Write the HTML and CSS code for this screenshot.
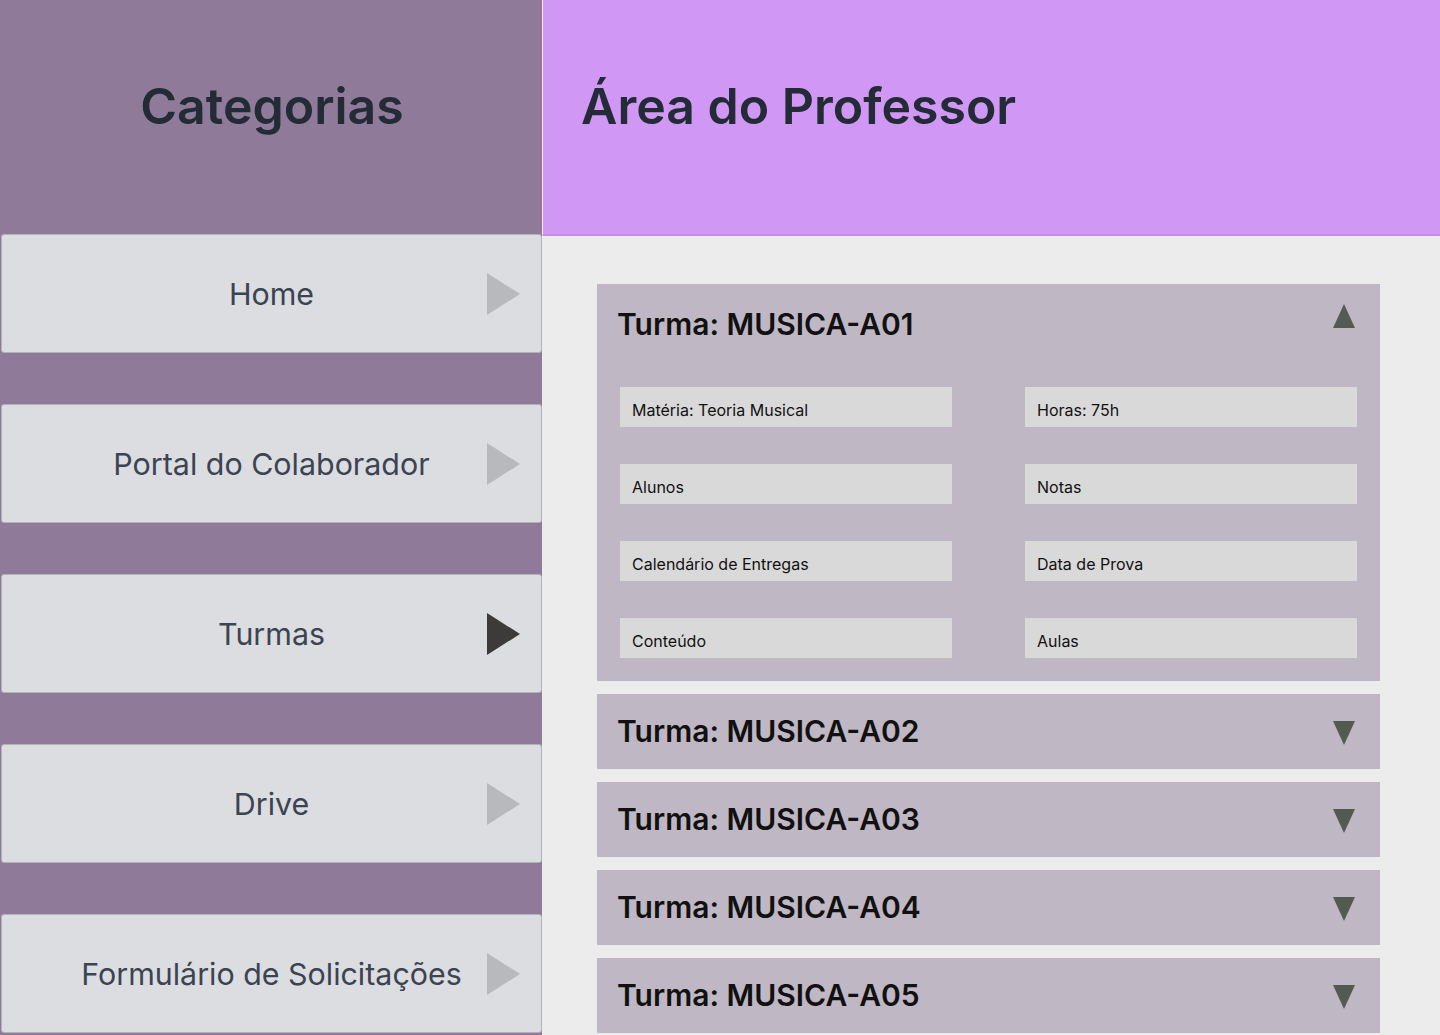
FILE: index.html
```html
<!DOCTYPE html>
<html lang="pt-BR">
<head>
<meta charset="utf-8">
<title>Área do Professor</title>
<link rel="stylesheet" href="styles.css">
</head>
<body>
<div class="page">
  <aside class="sidebar">
    <header class="side-head"><h1>Categorias</h1></header>
    <nav class="nav">
      <a class="nav-item"><span class="nav-label">Home</span><svg class="nav-arrow" width="33" height="42" viewBox="0 0 33 42"><polygon points="0,0 33,21 0,42" fill="#b8b9bc"/></svg></a>
      <a class="nav-item"><span class="nav-label">Portal do Colaborador</span><svg class="nav-arrow" width="33" height="42" viewBox="0 0 33 42"><polygon points="0,0 33,21 0,42" fill="#b8b9bc"/></svg></a>
      <a class="nav-item"><span class="nav-label">Turmas</span><svg class="nav-arrow" width="33" height="42" viewBox="0 0 33 42"><polygon points="0,0 33,21 0,42" fill="#3d3b39"/></svg></a>
      <a class="nav-item"><span class="nav-label">Drive</span><svg class="nav-arrow" width="33" height="42" viewBox="0 0 33 42"><polygon points="0,0 33,21 0,42" fill="#b8b9bc"/></svg></a>
      <a class="nav-item"><span class="nav-label">Formulário de Solicitações</span><svg class="nav-arrow" width="33" height="42" viewBox="0 0 33 42"><polygon points="0,0 33,21 0,42" fill="#b8b9bc"/></svg></a>
    </nav>
  </aside>
  <main class="main">
    <header class="main-head"><h1>Área do Professor</h1></header>
    <section class="content">
      <div class="panel open">
        <div class="panel-head">
          <h2>Turma: MUSICA-A01</h2>
          <svg class="caret up" width="22" height="24" viewBox="0 0 22 24"><polygon points="11,0 22,24 0,24" fill="#525a52"/></svg>
        </div>
        <div class="panel-body">
          <div class="field">Matéria: Teoria Musical</div>
          <div class="field">Horas: 75h</div>
          <div class="field">Alunos</div>
          <div class="field">Notas</div>
          <div class="field">Calendário de Entregas</div>
          <div class="field">Data de Prova</div>
          <div class="field">Conteúdo</div>
          <div class="field">Aulas</div>
        </div>
      </div>
      <div class="panel">
        <div class="panel-head">
          <h2>Turma: MUSICA-A02</h2>
          <svg class="caret" width="22" height="24" viewBox="0 0 22 24"><polygon points="0,0 22,0 11,24" fill="#525a52"/></svg>
        </div>
      </div>
      <div class="panel">
        <div class="panel-head">
          <h2>Turma: MUSICA-A03</h2>
          <svg class="caret" width="22" height="24" viewBox="0 0 22 24"><polygon points="0,0 22,0 11,24" fill="#525a52"/></svg>
        </div>
      </div>
      <div class="panel">
        <div class="panel-head">
          <h2>Turma: MUSICA-A04</h2>
          <svg class="caret" width="22" height="24" viewBox="0 0 22 24"><polygon points="0,0 22,0 11,24" fill="#525a52"/></svg>
        </div>
      </div>
      <div class="panel">
        <div class="panel-head">
          <h2>Turma: MUSICA-A05</h2>
          <svg class="caret" width="22" height="24" viewBox="0 0 22 24"><polygon points="0,0 22,0 11,24" fill="#525a52"/></svg>
        </div>
      </div>
    </section>
  </main>
</div>
</body>
</html>
```
FILE: styles.css
```css
* { box-sizing: border-box; }
html, body { margin: 0; padding: 0; }
body {
  font-family: Inter, "Noto Sans", "Liberation Sans", sans-serif;
  background: #ececec;
  width: 1440px;
  height: 1035px;
  overflow: hidden;
}
.page {
  display: flex;
  height: 1035px;
}
.sidebar {
  width: 542px;
  flex: none;
  background: #8f7b99;
  display: flex;
  flex-direction: column;
}
.side-head {
  height: 234px;
  padding-top: 76px;
  text-align: center;
}
.side-head h1,
.main-head h1 {
  margin: 0;
  font-size: 50px;
  font-weight: 600;
  line-height: 60px;
  color: #232b37;
  letter-spacing: 0;
}
.side-head h1 { padding-left: 2px; }
.nav {
  display: flex;
  flex-direction: column;
  gap: 51px;
  padding-left: 1px;
}
.nav-item {
  height: 119px;
  width: 541px;
  background: #dcdde0;
  border: 1px solid #b1b2b6;
  border-radius: 3px;
  display: grid;
  grid-template-columns: 1fr auto 1fr;
  align-items: center;
}
.nav-label {
  grid-column: 2;
  font-size: 30.4px;
  font-weight: 400;
  color: #3b4452;
  white-space: nowrap;
}
.nav-arrow {
  grid-column: 3;
  justify-self: end;
  margin-right: 21px;
  display: block;
}
.main {
  flex: 1;
  display: flex;
  flex-direction: column;
}
.main-head {
  height: 236px;
  background: #d197f5;
  border-bottom: 2px solid #c78de9;
  border-left: 1px solid #f4ecf8;
  padding: 76px 0 0 38px;
}
.content {
  padding: 48px 60px 0 55px;
  display: flex;
  flex-direction: column;
  gap: 13px;
}
.panel {
  background: #c0b7c4;
}
.panel-head {
  height: 75px;
  display: flex;
  align-items: center;
  justify-content: space-between;
  padding: 0 25px 0 20px;
}
.panel-head h2 {
  margin: 0;
  font-size: 30px;
  font-weight: 600;
  color: #111111;
  line-height: 36px;
  margin-top: -2px;
}
.caret { display: block; margin-top: 2px; }
.caret.up { margin-top: -12px; }
.open .panel-head h2 { margin-top: 5px; }
.panel-body {
  padding: 28px 23px 23px 23px;
  display: grid;
  grid-template-columns: 332px 332px;
  column-gap: 73px;
  row-gap: 37px;
}
.field {
  height: 40px;
  background: #d9d9d9;
  padding: 5px 12px 0;
  display: flex;
  align-items: center;
  font-size: 16px;
  color: #111111;
}
```
